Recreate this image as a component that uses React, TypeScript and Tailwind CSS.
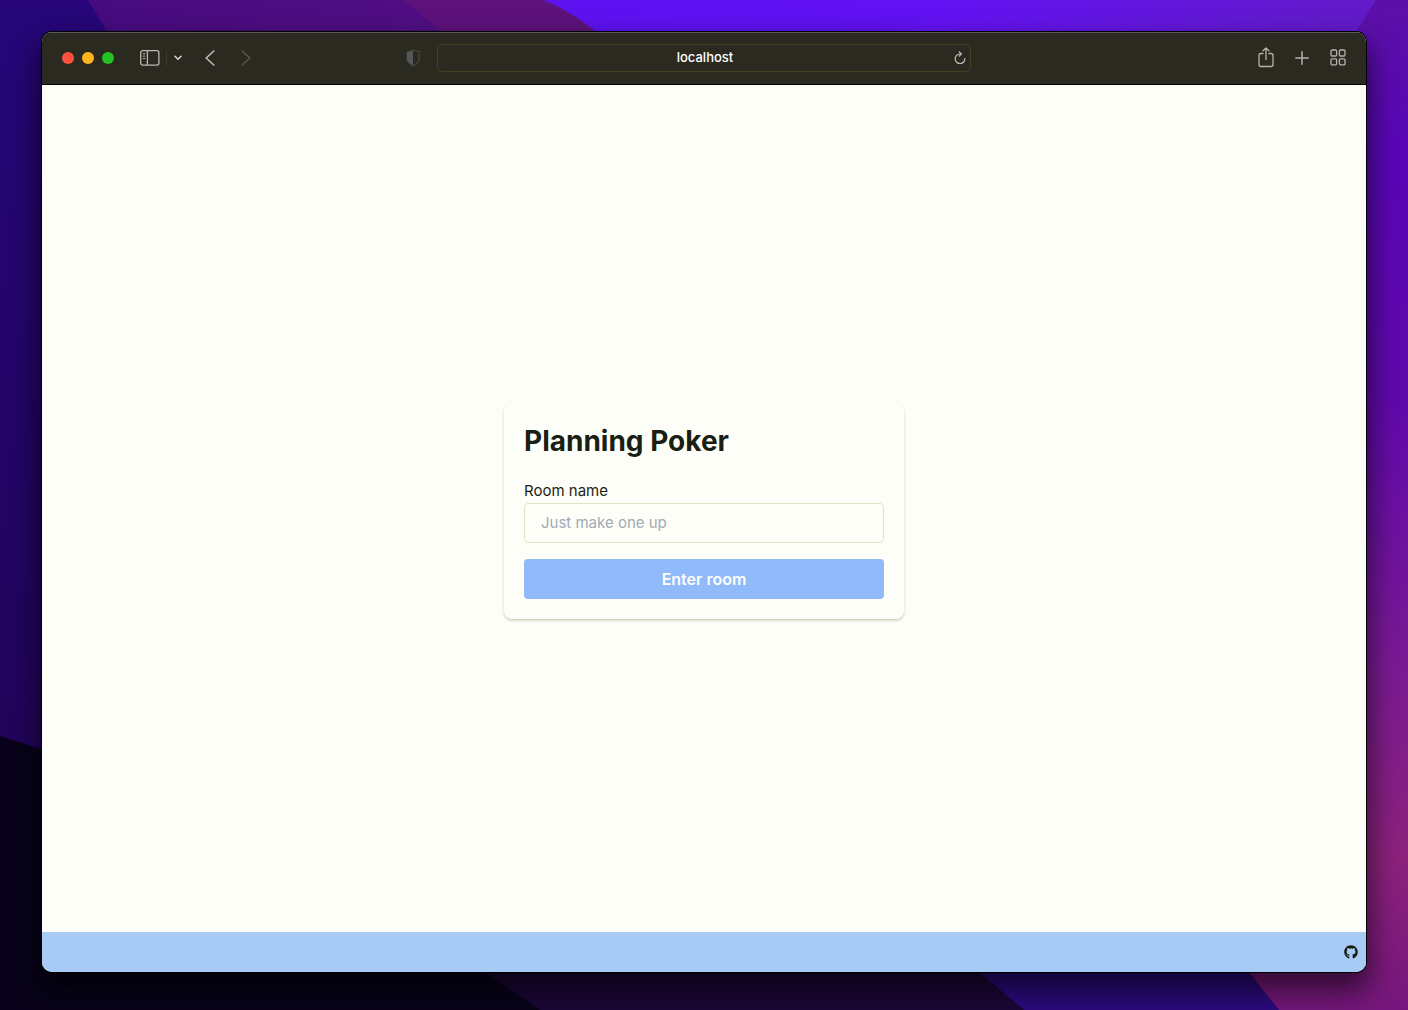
import { useState } from "react";
import type { ReactNode } from "react";
import { FaGithub } from "react-icons/fa";

function Wallpaper() {
  return (
    <svg
      className="absolute inset-0 h-full w-full"
      viewBox="0 0 1408 1010"
      preserveAspectRatio="none"
      aria-hidden="true"
    >
      <defs>
        <linearGradient id="left" x1="0" y1="0" x2="0" y2="1">
          <stop offset="0" stopColor="#26067a" />
          <stop offset="1" stopColor="#220459" />
        </linearGradient>
        <linearGradient id="top" x1="0" y1="0" x2="1" y2="0">
          <stop offset="0" stopColor="#470b80" />
          <stop offset="1" stopColor="#571088" />
        </linearGradient>
        <linearGradient id="bright" x1="0" y1="0" x2="1" y2="0">
          <stop offset="0" stopColor="#5d12f2" />
          <stop offset="0.45" stopColor="#6212f4" />
          <stop offset="1" stopColor="#621cc4" />
        </linearGradient>
        <linearGradient id="right" x1="0" y1="0" x2="0" y2="1">
          <stop offset="0" stopColor="#5c10a8" />
          <stop offset="0.15" stopColor="#5a06b8" />
          <stop offset="0.4" stopColor="#6109ac" />
          <stop offset="0.65" stopColor="#7a1a95" />
          <stop offset="0.85" stopColor="#8c227c" />
          <stop offset="1" stopColor="#77177e" />
        </linearGradient>
      </defs>
      <rect width="1408" height="1010" fill="#08031a" />
      <path d="M0 0H200V800L0 736Z" fill="url(#left)" />
      <path d="M88 0H700V200H210Z" fill="url(#top)" />
      <path d="M404 0H700V200H640Z" fill="#5e127c" />
      <path d="M544 0H1408V200H720Q640 40 544 0Z" fill="url(#bright)" />
      <path d="M484 972H1030V1010H540Z" fill="#1c0638" />
      <path d="M979 972H1300V1010H1024Z" fill="#2c0a80" />
      <path d="M1376 0H1408V1010H1279L1200 910V230L1356 32Z" fill="url(#right)" />
    </svg>
  );
}

type ToolButtonProps = {
  label: string;
  className: string;
  children: ReactNode;
};

function ToolButton({ label, className, children }: ToolButtonProps) {
  return (
    <button type="button" aria-label={label} className={`flex h-6 shrink-0 items-center justify-center ${className}`}>
      {children}
    </button>
  );
}

function Toolbar() {
  return (
    <header className="grid h-[53px] grid-cols-[1fr_534px_1fr] items-center border-t border-b border-t-[#5b5a55] border-b-black bg-[#2b2a20] px-5 pb-0.5">
      <div className="flex items-center pr-4">
        <div className="flex gap-2">
          <button type="button" aria-label="Close window" className="size-3 rounded-full bg-[#ff5040]" />
          <button type="button" aria-label="Minimize window" className="size-3 rounded-full bg-[#ffb31c]" />
          <button type="button" aria-label="Zoom window" className="size-3 rounded-full bg-[#22c322]" />
        </div>
        <ToolButton label="Show sidebar" className="ml-6 w-6 text-[#b9b8b0]">
          <svg width="20" height="16" viewBox="0 0 20 16" fill="none" stroke="currentColor" strokeWidth="1.3">
            <rect x="0.7" y="0.7" width="18.2" height="14.4" rx="2" />
            <path d="M7.4 1v14" />
            <path d="M2.8 3.7h2.4M2.8 6.1h2.4M2.8 8.5h2.4" strokeWidth="1" />
          </svg>
        </ToolButton>
        <span className="ml-1 h-4 w-px bg-[#3a392f]" />
        <ToolButton label="Sidebar options" className="ml-px w-5 text-[#d6d5cd]">
          <svg width="8" height="6" viewBox="0 0 8 6" fill="none" stroke="currentColor" strokeWidth="1.5" strokeLinecap="round" strokeLinejoin="round">
            <path d="M1 1.3 4 4.2 7 1.3" />
          </svg>
        </ToolButton>
        <ToolButton label="Back" className="ml-3 w-5 text-[#c2c1b9]">
          <svg width="10" height="16" viewBox="0 0 10 16" fill="none" stroke="currentColor" strokeWidth="1.5" strokeLinecap="round" strokeLinejoin="round">
            <path d="M8.8 1 1.2 8l7.6 7" />
          </svg>
        </ToolButton>
        <ToolButton label="Forward" className="ml-4 w-5 text-[#58574b]">
          <svg width="10" height="16" viewBox="0 0 10 16" fill="none" stroke="currentColor" strokeWidth="1.5" strokeLinecap="round" strokeLinejoin="round">
            <path d="m1.2 1 7.6 7-7.600 7" />
          </svg>
        </ToolButton>
        <ToolButton label="Privacy report" className="ml-auto w-4 text-[#56565a]">
          <svg width="14" height="18" viewBox="0 0 14 18">
            <path d="M7 .8C5.300 2 3 2.500.8 2.700V10c0 3 3 5.300 6.200 7Z" fill="currentColor" />
            <path d="M7 .8C8.700 2 11 2.500 13.200 2.700V10c0 3-3 5.300-6.200 7" fill="none" stroke="#4a4930" strokeWidth="1.2" />
          </svg>
        </ToolButton>
      </div>
      <div className="flex h-7 items-center rounded-md border border-[#42411e] pr-0.5">
        <input
          aria-label="Address"
          defaultValue="localhost"
          className="min-w-0 flex-1 bg-transparent pl-5 text-center text-[13px] font-medium text-white outline-none"
        />
        <ToolButton label="Reload page" className="w-4 text-[#c2c1b9]">
          <svg width="12" height="13" viewBox="0 0 12 13" fill="none" stroke="currentColor" strokeWidth="1.2" strokeLinecap="round" strokeLinejoin="round">
            <path d="M10.800 7.500A4.800 4.800 0 1 1 6 3h1" />
            <path d="M5.300 1 7.300 3 5.300 5.100" />
          </svg>
        </ToolButton>
      </div>
      <div className="-mr-1 flex items-center justify-end gap-3 text-[#b5b3aa]">
        <ToolButton label="Share" className="w-6">
          <svg width="16" height="21" viewBox="0 0 16 21" fill="none" stroke="currentColor" strokeWidth="1.300" strokeLinecap="round" strokeLinejoin="round">
            <path d="M5 6.500H3a2 2 0 0 0-2 2v9a2 2 0 0 0 2 2h10a2 2 0 0 0 2-2v-9a2 2 0 0 0-2-2h-2M8 12.500V1M5 3.800 8 .9l3 2.900" />
          </svg>
        </ToolButton>
        <ToolButton label="New tab" className="w-6">
          <svg width="14" height="14" viewBox="0 0 14 14" fill="none" stroke="currentColor" strokeWidth="1.500" strokeLinecap="round">
            <path d="M7 .8v12.400M.8 7h12.400" />
          </svg>
        </ToolButton>
        <ToolButton label="Tab overview" className="w-6">
          <svg width="16" height="17" viewBox="0 0 16 17" fill="none" stroke="currentColor" strokeWidth="1.300">
            <rect x="1" y="1" width="5.600" height="6" rx="1" />
            <rect x="9.400" y="1" width="5.600" height="6" rx="1" />
            <rect x="1" y="9.800" width="5.600" height="6" rx="1" />
            <rect x="9.400" y="9.800" width="5.600" height="6" rx="1" />
          </svg>
        </ToolButton>
      </div>
    </header>
  );
}

function RoomForm() {
  const [room, setRoom] = useState("");
  return (
    <form
      onSubmit={(event) => event.preventDefault()}
      className="w-full max-w-[400px] rounded-lg p-5 shadow-[0_2px_3px_rgba(60,60,0,0.16),0_1px_2px_rgba(60,60,0,0.10)]"
    >
      <h1 className="text-[28px] leading-9 font-bold">Planning Poker</h1>
      <label htmlFor="room" className="mt-5 block text-[15px] leading-6">
        Room name
      </label>
      <input
        id="room"
        value={room}
        onChange={(event) => setRoom(event.target.value)}
        placeholder="Just make one up"
        className="block h-10 w-full rounded border border-[#e2e5c4] bg-transparent px-4 text-[15px] outline-none placeholder:text-[#9fabb4]"
      />
      <button type="submit" className="mt-4 block h-10 w-full rounded bg-[#90baf9] font-semibold text-[#fefefa]">
        Enter room
      </button>
    </form>
  );
}

export default function App() {
  return (
    <div className="relative flex min-h-screen flex-col bg-[#08031a] px-[42px] pt-8 pb-[38px] font-['Inter','Liberation_Sans',sans-serif] text-base text-[#1a1f14]">
      <Wallpaper />
      <div className="relative flex flex-1 flex-col overflow-hidden rounded-[10px] bg-[#fefef9] shadow-[0_0_0_1px_#000,0_16px_30px_4px_rgba(0,0,0,0.6)]">
        <Toolbar />
        <main className="flex flex-1 items-center justify-center px-4 pt-1">
          <RoomForm />
        </main>
        <footer className="flex h-10 items-center justify-end bg-[#a8cbf5] px-2">
          <a href="https://github.com" aria-label="GitHub">
            <FaGithub size={14} />
          </a>
        </footer>
      </div>
    </div>
  );
}
